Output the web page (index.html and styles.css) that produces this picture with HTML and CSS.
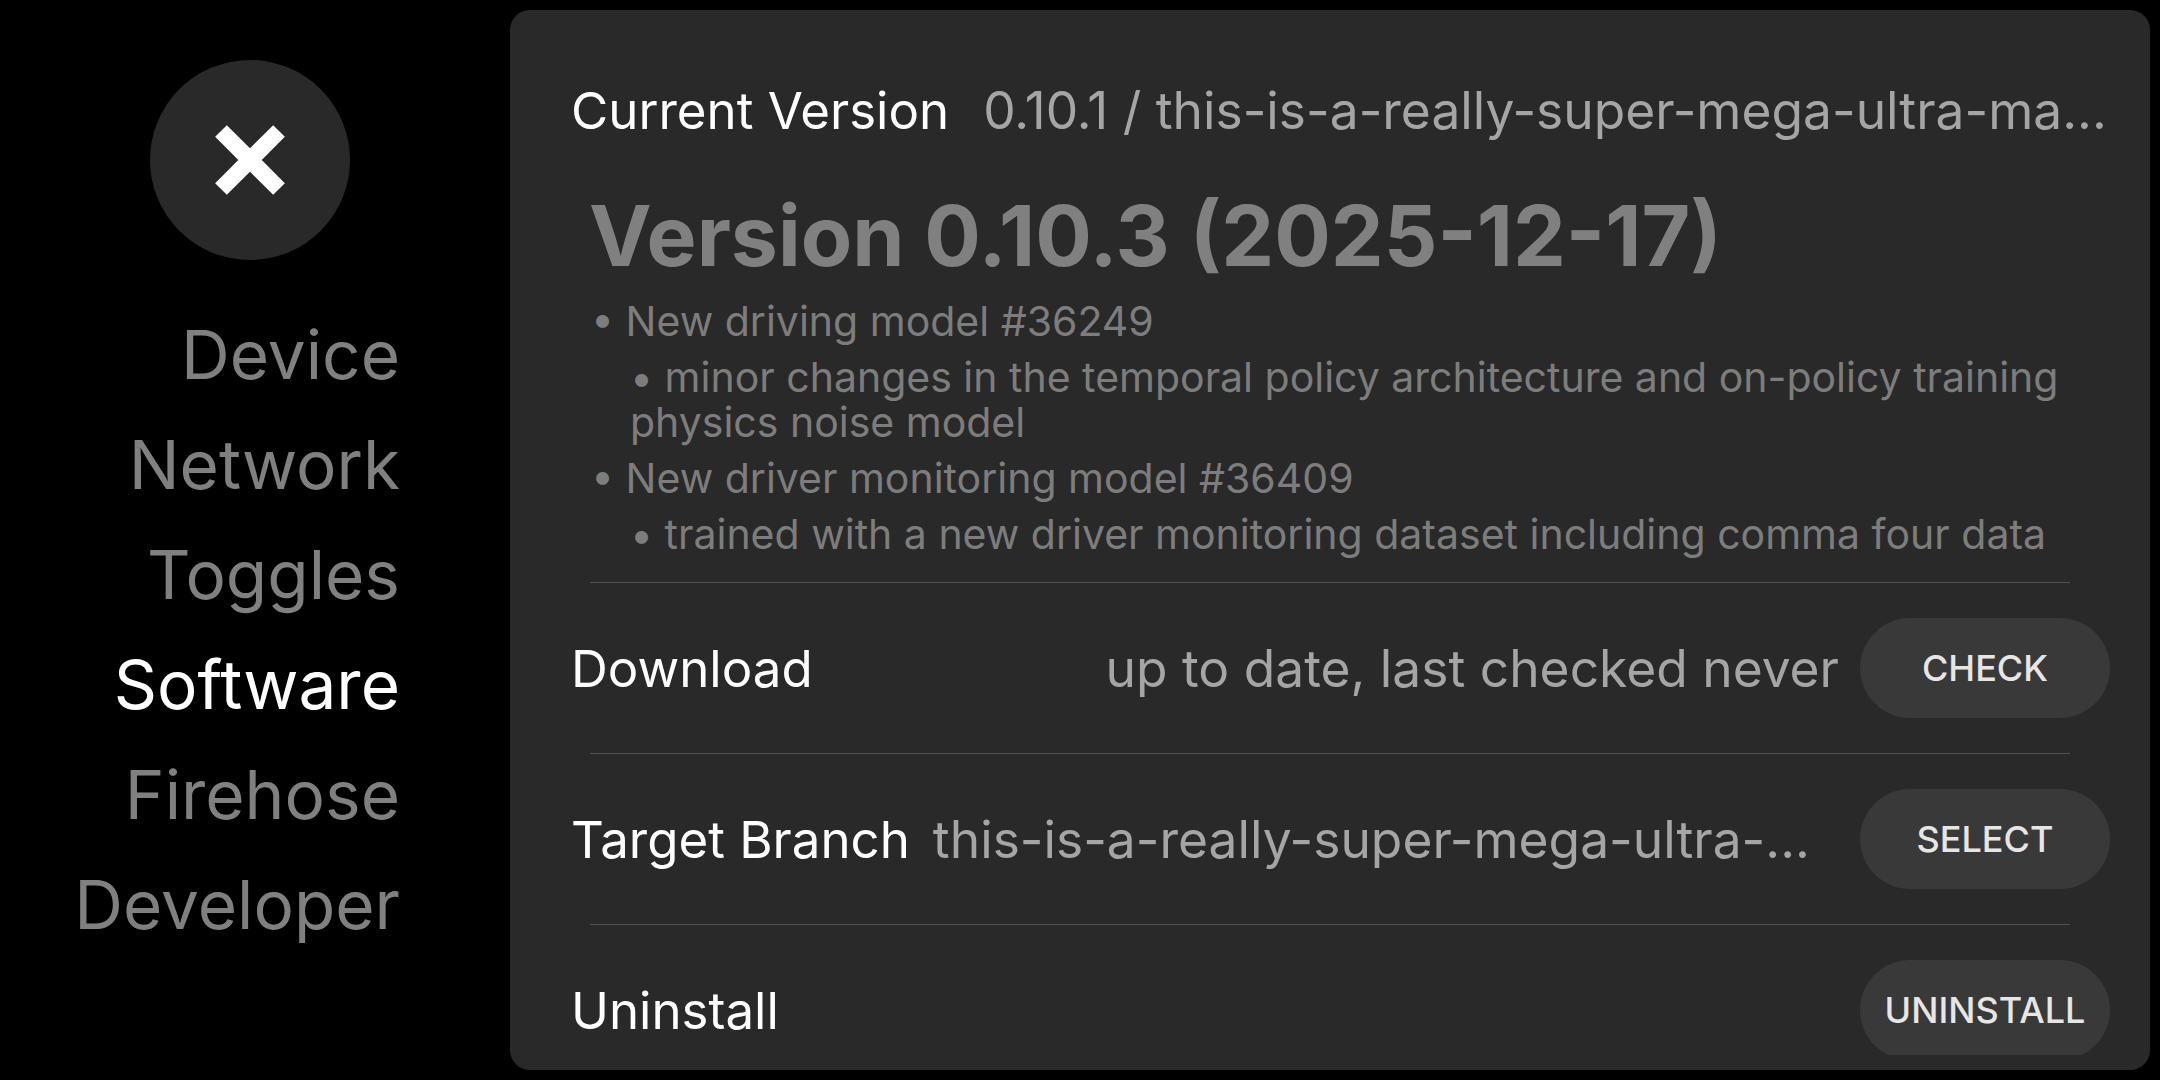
FILE: index.html
```html
<!DOCTYPE html>
<html lang="en">
<head>
    <meta charset="UTF-8">
    <title>Settings - Software</title>
    <link rel="stylesheet" href="styles.css">
</head>
<body>
    <div class="sidebar">
        <div class="close-btn">
            <svg width="70" height="70" viewBox="0 0 70 70">
                <path d="M6 6 L64 64 M64 6 L6 64" stroke="#fff" stroke-width="16.5" stroke-linecap="butt" fill="none"/>
            </svg>
        </div>
        <div class="nav">
            <div class="nav-item">Device</div>
            <div class="nav-item">Network</div>
            <div class="nav-item">Toggles</div>
            <div class="nav-item active">Software</div>
            <div class="nav-item">Firehose</div>
            <div class="nav-item">Developer</div>
        </div>
    </div>

    <div class="panel">
        <div class="scroll">
            <div class="row">
                <span class="label">Current Version</span>
                <span class="value">0.10.1 / this-is-a-really-super-mega-ultra-ma...</span>
            </div>

            <div class="notes">
                <div class="notes-title">Version 0.10.3 (2025-12-17)</div>
                <div class="note">• New driving model #36249</div>
                <div class="note sub">• minor changes in the temporal policy architecture and on-policy training physics noise model</div>
                <div class="note">• New driver monitoring model #36409</div>
                <div class="note sub">• trained with a new driver monitoring dataset including comma four data</div>
            </div>

            <div class="divider"></div>
            <div class="row">
                <span class="label">Download</span>
                <span class="value status">up to date, last checked never</span>
                <button class="btn">CHECK</button>
            </div>

            <div class="divider"></div>
            <div class="row">
                <span class="label">Target Branch</span>
                <span class="value branch">this-is-a-really-super-mega-ultra-...</span>
                <button class="btn">SELECT</button>
            </div>

            <div class="divider"></div>
            <div class="row">
                <span class="label">Uninstall</span>
                <button class="btn">UNINSTALL</button>
            </div>
        </div>
    </div>
</body>
</html>
```

FILE: styles.css
```css
body {
    margin: 0;
    width: 2160px;
    height: 1080px;
    background: #000;
    font-family: Inter, "Noto Sans", sans-serif;
    display: flex;
    overflow: hidden;
}
.sidebar {
    width: 500px;
    flex-shrink: 0;
    display: flex;
    flex-direction: column;
}
.close-btn {
    width: 200px;
    height: 200px;
    margin: 60px 0 0 150px;
    border-radius: 50%;
    background: #292929;
    display: flex;
    align-items: center;
    justify-content: center;
}
.nav {
    margin-top: 40px;
    padding-right: 100px;
    text-align: right;
}
.nav-item {
    font-size: 67.5px;
    line-height: 110px;
    color: #808080;
}
.nav-item.active {
    color: #fff;
}
.panel {
    flex: 1;
    margin: 10px;
    padding: 15px 40px 15px 61px;
    background: #292929;
    border-radius: 20px;
    display: flex;
    flex-direction: column;
}
.scroll {
    flex: 1;
    overflow: hidden;
}
.row {
    height: 170px;
    display: flex;
    align-items: center;
}
.label {
    font-size: 51px;
    color: #fff;
    white-space: nowrap;
}
.value {
    font-size: 51.5px;
    color: #a5a5a5;
    margin-left: 34px;
    white-space: nowrap;
}
.value.branch {
    margin-left: 23px;
}
.value.status {
    margin-left: auto;
    margin-right: 21px;
}
.btn {
    width: 250px;
    height: 100px;
    margin-left: auto;
    flex-shrink: 0;
    border: none;
    border-radius: 50px;
    background: #393939;
    color: #e6e6e6;
    font-family: Inter, "Noto Sans", sans-serif;
    font-size: 36px;
    font-weight: 500;
}
.value.status + .btn {
    margin-left: 0;
}
.notes {
    margin: 0 40px 25px 18px;
}
.notes-title {
    font-size: 84px;
    line-height: 82px;
    font-weight: 700;
    color: #808080;
    margin-bottom: 22px;
}
.note {
    font-size: 41px;
    line-height: 45px;
    color: #7d7d7d;
    margin-left: 2px;
}
.note + .note {
    margin-top: 11px;
}
.note.sub {
    margin-left: 41px;
}
.divider {
    height: 1px;
    background: #505050;
    margin: 0 40px 0 19px;
}
```
